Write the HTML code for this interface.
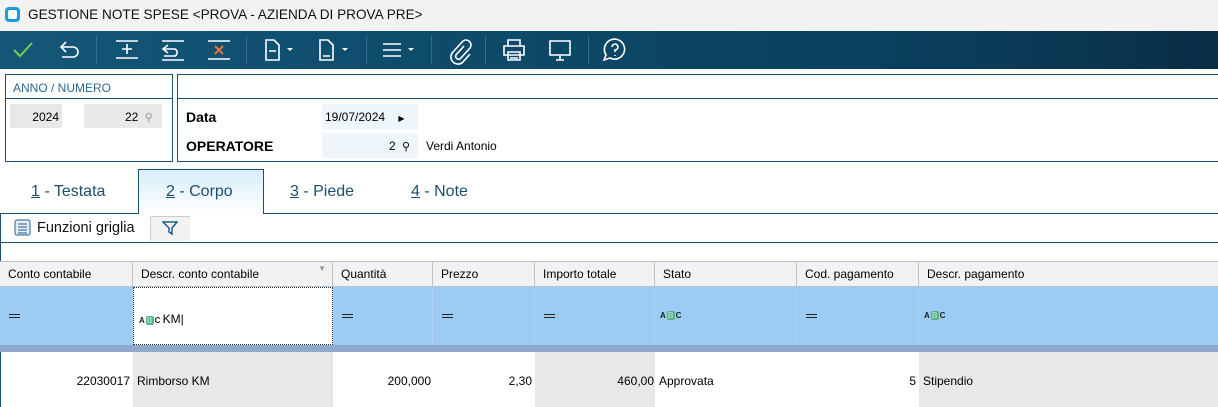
<!DOCTYPE html>
<html><head><meta charset="utf-8"><style>
*{box-sizing:border-box;margin:0;padding:0}
body{width:1218px;height:407px;overflow:hidden;background:#fff;font-family:"Liberation Sans",sans-serif;position:relative}
.a{position:absolute}
.t{font-size:12px;color:#000;white-space:nowrap}
.sep{position:absolute;top:36px;width:1px;height:28px;background:#3b6a88}
.hd{position:absolute;top:262px;height:25px;background:#f2f2f2;border-right:1px solid #b8c4d0;border-bottom:1px solid #b8c4d0;font-size:12px;padding:5px 0 0 8px}
.fc{position:absolute;top:287px;height:58px;border-right:1px solid #b5d3ee}
.eq{position:absolute;top:27px;left:9px;width:11px;height:4px;border-top:1.5px solid #222;border-bottom:1.5px solid #222}
.abc{position:absolute;top:24px;left:5px;font-size:8px;font-weight:bold;color:#222;letter-spacing:0}
.abc b{display:inline-block;background:#5bb08a;color:#9ee0c0;padding:0 1px;border-radius:2px;margin:0 1px}
.dc{position:absolute;top:352px;height:55px;font-size:12px;padding-top:22px}
</style></head><body>
<div class="a" style="left:0;top:0;width:1218px;height:31px;background:#f2f2f2"></div>
<div class="a" style="left:5px;top:7px;width:15px;height:15px;border-radius:4px;background:#1e9be0"></div>
<div class="a" style="left:8px;top:10px;width:9px;height:9px;border-radius:2px;background:#fff"></div>
<div class="a" style="left:28px;top:7px;font-size:13.6px;color:#111">GESTIONE NOTE SPESE &lt;PROVA - AZIENDA DI PROVA PRE&gt;</div>
<div class="a" style="left:0;top:31px;width:1218px;height:38px;background:linear-gradient(90deg,#155777 0%,#0d4a6a 40%,#0a3d5a 80%,#0a2d45 100%)"></div>
<svg class="a" style="left:0;top:31px" width="660" height="38" fill="none" stroke="#fff" stroke-width="1.6">
<path d="M14 19l6 6 12-13" stroke="#6fd24a" stroke-width="2"/>
<path d="M66 11l-5 5 5 5M61 16h12a5 5 0 0 1 0 10H62"/>
<path d="M116 10h22M127 13v10M122 18h10M116 27h22"/>
<path d="M162 10h22M168 14l-5 4 5 4M163 18h12a4 4 0 0 1 0 7h-11M162 29h22"/>
<path d="M208 10h22M208 28h22"/><path d="M215 15l8 8M223 15l-8 8" stroke="#e8733a" stroke-width="2"/>
<path d="M266 9h8l5 5v15h-13zM269 20h7"/><path d="M287 17h6l-3 3z" fill="#fff" stroke="none"/>
<path d="M320 9h8l5 5v15h-13zM323 25h7"/><path d="M342 17h6l-3 3z" fill="#fff" stroke="none"/>
<path d="M383 13h18M383 19h18M383 25h18"/><path d="M408 17h6l-3 3z" fill="#fff" stroke="none"/>
<path d="M464 15l-8 9a3 3 0 0 0 4 4l10-11a5 5 0 0 0-7-7l-10 11a7 7 0 0 0 10 10l7-8"/>
<path d="M508 15v-6h12v6M504 15h20v9h-20zM508 21h12v8h-12zM510 24h8M510 27h8"/>
<path d="M550 10h20v14h-20zM556 29h8M560 24v5"/>
<path d="M606 13a10 10 0 1 1 4 14l-6 2 2-5a10 10 0 0 1 0-11zM612 16a3 3 0 1 1 3 3v2M615 24v1"/>
</svg>
<div class="sep" style="left:96px"></div><div class="sep" style="left:246px"></div><div class="sep" style="left:366px"></div><div class="sep" style="left:431px"></div><div class="sep" style="left:485px"></div><div class="sep" style="left:588px"></div>
<div class="a" style="left:5px;top:74px;width:168px;height:88px;border:1.5px solid #1d4f6e"></div>
<div class="a" style="left:5px;top:98px;width:168px;height:1px;background:#1d4f6e"></div>
<div class="a" style="left:13px;top:81px;font-size:12px;color:#2a6a98">ANNO / NUMERO</div>
<div class="a t" style="left:10px;top:104px;width:52px;height:24px;background:#e8e8e8;text-align:right;padding:6px 3px 0 0">2024</div>
<div class="a t" style="left:84px;top:104px;width:78px;height:24px;background:#e8e8e8;padding:6px 0 0 41px">22 <span style="color:#999;font-size:11px;margin-left:3px">⚲</span></div>
<div class="a" style="left:177px;top:74px;width:1045px;height:88px;border:1.5px solid #1d4f6e"></div>
<div class="a" style="left:177px;top:98px;width:1045px;height:1px;background:#1d4f6e"></div>
<div class="a" style="left:186px;top:109px;font-size:14px;font-weight:bold">Data</div>
<div class="a t" style="left:322px;top:104px;width:96px;height:25px;background:#eef5fb;padding:6px 0 0 3px">19/07/2024 <span style="font-size:8px;margin-left:10px">▶</span></div>
<div class="a" style="left:186px;top:138px;font-size:14px;font-weight:bold">OPERATORE</div>
<div class="a t" style="left:322px;top:133px;width:96px;height:25px;background:#eef5fb;padding:6px 0 0 67px">2 <span style="font-size:11px;margin-left:3px">⚲</span></div>
<div class="a t" style="left:426px;top:139px">Verdi Antonio</div>
<div class="a" style="left:138px;top:169px;width:126px;height:45px;border:1px solid #1d4f6e;border-bottom:none;background:linear-gradient(#d8eefb,#fff)"></div>
<div class="a" style="left:0;top:213px;width:138px;height:1px;background:#1d4f6e"></div>
<div class="a" style="left:264px;top:213px;width:954px;height:1px;background:#1d4f6e"></div>
<div class="a" style="left:31px;top:183px;font-size:16px;color:#1d4f6e"><u>1</u> - Testata</div>
<div class="a" style="left:166px;top:183px;font-size:16px;color:#1d4f6e"><u>2</u> - Corpo</div>
<div class="a" style="left:290px;top:183px;font-size:16px;color:#1d4f6e"><u>3</u> - Piede</div>
<div class="a" style="left:411px;top:183px;font-size:16px;color:#1d4f6e"><u>4</u> - Note</div>
<div class="a" style="left:0;top:213px;width:1px;height:194px;background:#1d4f6e"></div>
<svg class="a" style="left:14px;top:219px" width="18" height="18" fill="none" stroke="#4a7aa0" stroke-width="1.2"><rect x="1" y="1" width="15" height="15" rx="2" fill="#e4eef6"/><path d="M4 5h9M4 8h9M4 11h9M4 14h9"/></svg>
<div class="a" style="left:37px;top:220px;font-size:14.5px;color:#111">Funzioni griglia</div>
<div class="a" style="left:150px;top:216px;width:40px;height:25px;background:#f2f2f2;border-left:1px solid #ccc;border-top:1px solid #ccc"></div>
<svg class="a" style="left:162px;top:220px" width="16" height="16" fill="none" stroke="#1d5e86" stroke-width="1.5"><path d="M1 2h14l-5 6v6l-3-2V8z"/></svg>
<div class="a" style="left:0;top:242px;width:1218px;height:1px;background:#1d4f6e"></div>
<div class="a" style="left:0;top:261px;width:1218px;height:1px;background:#b8c4d0"></div>
<div class="hd" style="left:0;width:133px">Conto contabile</div>
<div class="hd" style="left:133px;width:200px">Descr. conto contabile<span style="position:absolute;right:6px;top:2px;font-size:8px;color:#999">▼</span></div>
<div class="hd" style="left:333px;width:100px">Quantità</div>
<div class="hd" style="left:433px;width:102px">Prezzo</div>
<div class="hd" style="left:535px;width:120px">Importo totale</div>
<div class="hd" style="left:655px;width:142px">Stato</div>
<div class="hd" style="left:797px;width:122px">Cod. pagamento</div>
<div class="hd" style="left:919px;width:299px;border-right:none">Descr. pagamento</div>
<div class="a" style="left:0;top:287px;width:1218px;height:58px;background:#9ccbf3"></div>
<div class="fc" style="left:0;width:133px"><div class="eq"></div></div>
<div class="fc" style="left:133px;width:200px;background:#fff;border:1px dotted #333"><div class="abc">A<b>B</b>C <span style="font-size:12px;font-weight:normal;color:#000">KM|</span></div></div>
<div class="fc" style="left:333px;width:100px"><div class="eq"></div></div>
<div class="fc" style="left:433px;width:102px"><div class="eq"></div></div>
<div class="fc" style="left:535px;width:120px"><div class="eq"></div></div>
<div class="fc" style="left:655px;width:142px"><div class="abc">A<b>B</b>C</div></div>
<div class="fc" style="left:797px;width:122px"><div class="eq"></div></div>
<div class="fc" style="left:919px;width:299px;border:none"><div class="abc">A<b>B</b>C</div></div>
<div class="a" style="left:0;top:345px;width:1218px;height:7px;background:#8eaacb"></div>
<div class="dc" style="left:0;width:133px;text-align:right;padding-right:3px">22030017</div>
<div class="dc" style="left:133px;width:200px;background:#e8e8e8;padding-left:4px">Rimborso KM</div>
<div class="dc" style="left:333px;width:100px;text-align:right;padding-right:2px">200,000</div>
<div class="dc" style="left:433px;width:102px;text-align:right;padding-right:3px">2,30</div>
<div class="dc" style="left:535px;width:120px;background:#e8e8e8;text-align:right;padding-right:1px">460,00</div>
<div class="dc" style="left:655px;width:142px;padding-left:4px">Approvata</div>
<div class="dc" style="left:797px;width:122px;text-align:right;padding-right:3px">5</div>
<div class="dc" style="left:919px;width:299px;background:#e8e8e8;padding-left:4px">Stipendio</div>
</body></html>
